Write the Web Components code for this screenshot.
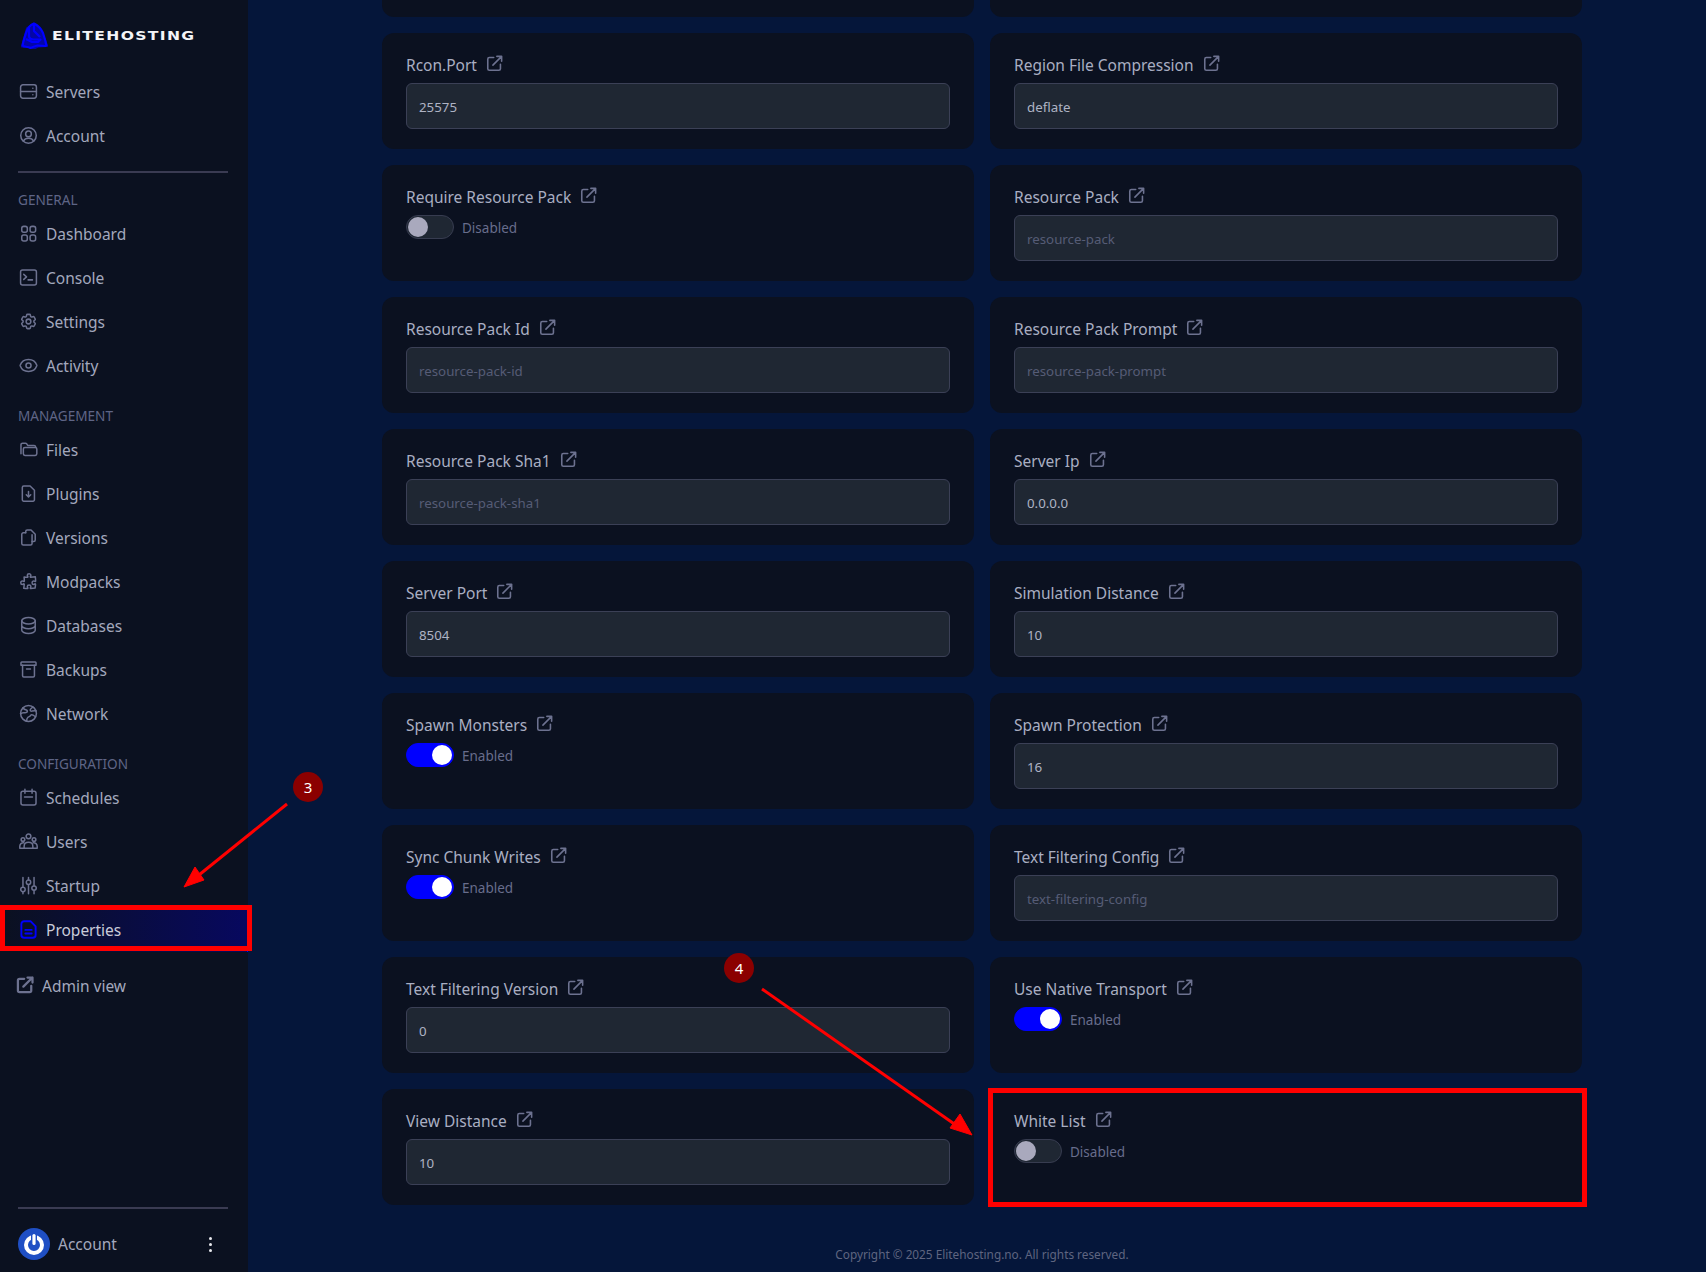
<!DOCTYPE html>
<html lang="en">
<head>
<meta charset="utf-8">
<title>Properties</title>
<style>
  html, body { margin: 0; padding: 0; background: #05163a; }
  body { font-family: "Noto Sans", "Liberation Sans", sans-serif; width: 1706px; height: 1272px; overflow: hidden; position: relative; }
</style>
</head>
<body>
<eh-shell>
  <eh-sidebar slot="side">
    <eh-nav-item icon="server" label="Servers"></eh-nav-item>
    <eh-nav-item icon="user" label="Account"></eh-nav-item>
    <eh-divider></eh-divider>
    <eh-nav-title first>GENERAL</eh-nav-title>
    <eh-nav-item icon="grid" label="Dashboard"></eh-nav-item>
    <eh-nav-item icon="console" label="Console"></eh-nav-item>
    <eh-nav-item icon="gear" label="Settings"></eh-nav-item>
    <eh-nav-item icon="eye" label="Activity"></eh-nav-item>
    <eh-nav-title>MANAGEMENT</eh-nav-title>
    <eh-nav-item icon="folder" label="Files"></eh-nav-item>
    <eh-nav-item icon="filedown" label="Plugins"></eh-nav-item>
    <eh-nav-item icon="copy" label="Versions"></eh-nav-item>
    <eh-nav-item icon="puzzle" label="Modpacks"></eh-nav-item>
    <eh-nav-item icon="db" label="Databases"></eh-nav-item>
    <eh-nav-item icon="archive" label="Backups"></eh-nav-item>
    <eh-nav-item icon="globe" label="Network"></eh-nav-item>
    <eh-nav-title>CONFIGURATION</eh-nav-title>
    <eh-nav-item icon="calendar" label="Schedules"></eh-nav-item>
    <eh-nav-item icon="users" label="Users"></eh-nav-item>
    <eh-nav-item icon="sliders" label="Startup"></eh-nav-item>
    <eh-nav-item icon="doc" label="Properties" active></eh-nav-item>
    <eh-admin-link></eh-admin-link>
  </eh-sidebar>
  <eh-field-stub></eh-field-stub><eh-field-stub></eh-field-stub>
  <eh-field label="Rcon.Port" value="25575"></eh-field>
  <eh-field label="Region File Compression" value="deflate"></eh-field>
  <eh-field label="Require Resource Pack" toggle="off"></eh-field>
  <eh-field label="Resource Pack" placeholder="resource-pack"></eh-field>
  <eh-field label="Resource Pack Id" placeholder="resource-pack-id"></eh-field>
  <eh-field label="Resource Pack Prompt" placeholder="resource-pack-prompt"></eh-field>
  <eh-field label="Resource Pack Sha1" placeholder="resource-pack-sha1"></eh-field>
  <eh-field label="Server Ip" value="0.0.0.0"></eh-field>
  <eh-field label="Server Port" value="8504"></eh-field>
  <eh-field label="Simulation Distance" value="10"></eh-field>
  <eh-field label="Spawn Monsters" toggle="on"></eh-field>
  <eh-field label="Spawn Protection" value="16"></eh-field>
  <eh-field label="Sync Chunk Writes" toggle="on"></eh-field>
  <eh-field label="Text Filtering Config" placeholder="text-filtering-config"></eh-field>
  <eh-field label="Text Filtering Version" value="0"></eh-field>
  <eh-field label="Use Native Transport" toggle="on"></eh-field>
  <eh-field label="View Distance" value="10"></eh-field>
  <eh-field label="White List" toggle="off"></eh-field>
</eh-shell>
<eh-annotations></eh-annotations>

<script>
  (function (customElements) {
    'use strict';

    const ICONS = {
      server: '<rect x="2" y="3.5" width="20" height="17" rx="3"/><path d="M2 12h20M17.5 7.8h.01M17.5 16.2h.01"/>',
      user: '<circle cx="12" cy="12" r="9.8"/><circle cx="12" cy="10" r="3.6"/><path d="M5.5 19c1.4-2.3 3.7-3.4 6.5-3.4s5.100 1.100 6.500 3.400"/>',
      grid: '<rect x="3.500" y="3" width="7" height="7.500" rx="2.500"/><rect x="14" y="3" width="7" height="7.500" rx="2.500"/><rect x="3.500" y="14" width="7" height="7.500" rx="2.500"/><rect x="14" y="14" width="7" height="7.500" rx="2.500"/>',
      console: '<rect x="2" y="2.500" width="20" height="19" rx="2.500"/><path d="M6 8l3.500 3.200L6 14.400M11.500 15h5.500"/>',
      gear: '<path d="M9.594 3.94c.09-.542.56-.94 1.11-.94h2.593c.55 0 1.02.398 1.11.94l.213 1.281c.063.374.313.686.645.87.074.04.147.083.22.127.325.196.72.257 1.075.124l1.217-.456a1.125 1.125 0 0 1 1.37.49l1.296 2.247a1.125 1.125 0 0 1-.26 1.431l-1.003.827c-.293.241-.438.613-.43.992a7.723 7.723 0 0 1 0 .255c-.008.378.137.75.43.991l1.004.827c.424.35.534.955.26 1.43l-1.298 2.247a1.125 1.125 0 0 1-1.369.491l-1.217-.456c-.355-.133-.75-.072-1.076.124a6.47 6.47 0 0 1-.22.128c-.331.183-.581.495-.644.869l-.213 1.281c-.09.543-.56.94-1.11.94h-2.594c-.55 0-1.019-.398-1.11-.94l-.213-1.281c-.062-.374-.312-.686-.644-.87a6.52 6.52 0 0 1-.22-.127c-.325-.196-.72-.257-1.076-.124l-1.217.456a1.125 1.125 0 0 1-1.369-.49l-1.297-2.247a1.125 1.125 0 0 1 .26-1.431l1.004-.827c.292-.24.437-.613.43-.991a6.932 6.932 0 0 1 0-.255c.007-.38-.138-.751-.43-.992l-1.004-.827a1.125 1.125 0 0 1-.26-1.43l1.297-2.247a1.125 1.125 0 0 1 1.37-.491l1.216.456c.356.133.751.072 1.076-.124.072-.044.146-.086.22-.128.332-.183.582-.495.644-.869l.214-1.28Z"/><circle cx="12" cy="12" r="3"/>',
      eye: '<path d="M1.500 12.300a1 1 0 0 1 0-.600C3 7.500 7.200 4.500 12 4.500s9 3 10.500 7.200a1 1 0 0 1 0 .600C21 16.500 16.800 19.500 12 19.500S3 16.500 1.500 12.300Z"/><circle cx="12" cy="12" r="3.200"/>',
      folder: '<path d="M2.500 17.500V6a2 2 0 0 1 2-2h3.600a2 2 0 0 1 1.600.800L11 6.800h8a2 2 0 0 1 2 1.700"/><rect x="5.500" y="9.500" width="17" height="10" rx="2"/>',
      filedown: '<path d="M6 2.500h8l5.500 5.500v12a1.800 1.800 0 0 1-1.800 1.800H6A1.800 1.800 0 0 1 4.200 20V4.300A1.800 1.800 0 0 1 6 2.500Z"/><path d="M12 9.500v6.500M9.200 13.600l2.800 2.800 2.800-2.800"/>',
      copy: '<path d="M8.500 6V4.500a2 2 0 0 1 2-2h4.700l5.300 5.300V15a2 2 0 0 1-2 2h-2"/><path d="M16.500 8.500V19.500a2 2 0 0 1-2 2H5.500a2 2 0 0 1-2-2V8a2 2 0 0 1 2-2h3"/>',
      puzzle: '<path d="M14.25 6.087c0-.355.186-.676.401-.959.221-.29.349-.634.349-1.003 0-1.036-1.007-1.875-2.25-1.875s-2.25.84-2.25 1.875c0 .369.128.713.349 1.003.215.283.401.604.401.959v0a.64.64 0 0 1-.657.643 48.39 48.39 0 0 1-4.163-.3c.186 1.613.293 3.25.315 4.907a.656.656 0 0 1-.658.663v0c-.355 0-.676-.186-.959-.401a1.647 1.647 0 0 0-1.003-.349c-1.036 0-1.875 1.007-1.875 2.25s.84 2.25 1.875 2.25c.369 0 .713-.128 1.003-.349.283-.215.604-.401.959-.401v0c.31 0 .555.26.532.57a48.039 48.039 0 0 1-.642 5.056c1.518.19 3.058.309 4.616.354a.64.64 0 0 0 .657-.643v0c0-.355-.186-.676-.401-.959a1.647 1.647 0 0 1-.349-1.003c0-1.035 1.008-1.875 2.25-1.875 1.243 0 2.25.84 2.25 1.875 0 .369-.128.713-.349 1.003-.215.283-.4.604-.4.959v0c0 .333.277.599.61.58a48.1 48.1 0 0 0 5.427-.63 48.05 48.05 0 0 0 .582-4.717.532.532 0 0 0-.533-.57v0c-.355 0-.676.186-.959.401-.29.221-.634.349-1.003.349-1.035 0-1.875-1.007-1.875-2.25s.84-2.25 1.875-2.25c.37 0 .713.128 1.003.349.283.215.604.401.96.401v0a.656.656 0 0 0 .658-.663 48.422 48.422 0 0 0-.37-5.36c-1.886.342-3.81.574-5.766.689a.578.578 0 0 1-.61-.58v0Z"/>',
      db: '<ellipse cx="12" cy="6" rx="8.500" ry="4"/><path d="M3.500 6v12c0 2.200 3.800 4 8.500 4s8.500-1.800 8.500-4V6M3.500 12c0 2.200 3.800 4 8.500 4s8.500-1.800 8.500-4"/>',
      archive: '<path d="M3.500 2.500h17a1 1 0 0 1 1 1v3h-19v-3a1 1 0 0 1 1-1Z"/><path d="M4.500 6.500V20a1.500 1.500 0 0 0 1.500 1.500h12a1.500 1.500 0 0 0 1.500-1.500V6.500M9.500 11.500h5"/>',
      globe: '<circle cx="12" cy="12" r="10"/><path d="M5 5c1.500 2 3 2.200 4.500 2.500 1.500.4 1.200 2.500 0 3.200-1.400.8-3.500-.2-5 .5-.8.4-2 .8-2.500 1M17.500 3.700c-1 1.500-2.500 2-3.200 3.300-.6 1.200.6 2.300 1.900 2 1.500-.3 3-.8 5.600-.2M9.500 21.500c.2-2 .5-3.600 1.800-4.700 1.300-1 3-1.200 3.500-2.500.5-1.200 2-1 3-.3 1 .7 2 1.500 3 2"/>',
      calendar: '<rect x="2.500" y="4" width="19" height="17.500" rx="2.500"/><path d="M7.500 1.500v5M16.500 1.500v5M7 11.500h10"/>',
      users: '<circle cx="12" cy="5.500" r="3"/><circle cx="5" cy="9.500" r="2.300"/><circle cx="19" cy="9.500" r="2.300"/><path d="M6.500 20.500v-2.500c0-3 2.400-5 5.500-5s5.500 2 5.500 5v2.500ZM6 13.500c-2.800-.2-5 1.800-5 4.500v2.500h5.500M18 13.500c2.800-.2 5 1.800 5 4.500v2.500h-5.500"/>',
      sliders: '<path d="M5 2v12M5 20v2.500M12 2v3M12 11v11.500M19 2v10M19 18.500v4"/><circle cx="5" cy="17" r="2.800"/><circle cx="12" cy="8" r="2.800"/><circle cx="19" cy="15.300" r="2.800"/>',
      doc: '<path d="M6.500 1.500h8L21 8v11a3.500 3.500 0 0 1-3.500 3.500h-11A3.500 3.500 0 0 1 3 19V5a3.500 3.500 0 0 1 3.500-3.500Z"/><path d="M8 12.500h8M8 17h8"/>',
      link: '<path d="M11 4.500H5.500a2 2 0 0 0-2 2v12a2 2 0 0 0 2 2h12a2 2 0 0 0 2-2V13"/><path d="M10 14L21 3M15 3h6v6"/>'
    };

    function icon(name, size, sw) {
      return `<svg width="${size}" height="${size}" viewBox="0 0 24 24" fill="none" stroke="currentColor" stroke-width="${sw}" stroke-linecap="round" stroke-linejoin="round">${ICONS[name]}</svg>`;
    }

    // page frame: fixed sidebar, grid of setting cards and the footer
    class EhShell extends HTMLElement {
      constructor() {
        super();
        this.attachShadow({mode: 'open'}).innerHTML = `
        <style>
          :host { display: flex; height: 1272px; }
          .main { flex: 1; min-width: 0; padding-left: 134px; }
          .grid { display: grid; grid-template-columns: 592px 592px; gap: 16px; width: 1200px; }
          footer {
            width: 1200px;
            margin-top: 41px;
            text-align: center;
            font-size: 11.800px;
            line-height: 16px;
            color: #5f6580;
          }
        </style>
        <slot name="side"></slot>
        <div class="main">
          <div class="grid"><slot></slot></div>
          <footer>Copyright © 2025 Elitehosting.no. All rights reserved.</footer>
        </div>`;
      }
    }

    class EhSidebar extends HTMLElement {
      constructor() {
        super();
        this.attachShadow({mode: 'open'}).innerHTML = `
        <style>
          :host {
            display: flex;
            flex-direction: column;
            flex: none;
            width: 248px;
            height: 1272px;
            background: #0b1120;
            box-sizing: border-box;
          }
          .logo { display: flex; align-items: center; height: 70px; padding-left: 21px; gap: 4px; box-sizing: border-box; }
          .logo svg { flex: none; margin-top: 1px; }
          .brand {
            font-family: "DejaVu Sans", sans-serif;
            font-weight: 700;
            font-size: 13px;
            letter-spacing: 1.1px;
            color: #f4f5f8;
            transform: scaleX(1.2);
            transform-origin: left center;
          }
          .nav { flex: 1; }
          .foot { padding: 0 20px 0 18px; }
          .foot hr { border: 0; height: 2px; background: #3a3b52; margin: 0 0 17px; }
          .acct { display: flex; align-items: center; height: 36px; margin-bottom: 10px; color: #a3a8bd; font-size: 15.500px; }
          .acct .name { flex: 1; margin-left: 8px; }
          .acct .avatar { width: 32px; height: 32px; flex: none; }
          .dots { display: flex; flex-direction: column; gap: 3px; margin-right: 16px; }
          .dots i { width: 3px; height: 3px; border-radius: 50%; background: #e8e9ee; }
        </style>
        <div class="logo">
          <svg width="27" height="27" viewBox="0 0 27 27" fill="none" stroke="#0000ff" stroke-width="2.200" stroke-linejoin="round">
            <path d="M13 1.500L19 7l5 11 2 6-9 .500-4 2-5-2H1l2-7 3-11z" fill="#0000ff" opacity=".6"/>
            <path d="M13 1.500C9 3 6.500 6 5 11c-1 3.500-2.500 7-3.500 13M13 1.500c4 2 7 5 9 9.500 1 3 2.500 8 3.500 13M1.500 24c3 1 5.500 .5 8 2 3-1.500 5-2 7-2.500 3 0 6 .5 9 .5M8 6v8c0 2.500 2 3.500 5 3.500h6M13 2v7l6 6M5 17l6 3h6l3-3"/>
          </svg>
          <span class="brand">ELITEHOSTING</span>
        </div>
        <div class="nav"><slot></slot></div>
        <div class="foot">
          <hr>
          <div class="acct">
            <svg class="avatar" viewBox="0 0 32 32">
              <circle cx="16" cy="16" r="16" fill="#1f4fc4"/>
              <circle cx="16" cy="17" r="8" fill="none" stroke="#fff" stroke-width="4"/>
              <path d="M16 7v9" stroke="#1f4fc4" stroke-width="6"/>
              <path d="M16 7.500v8" stroke="#fff" stroke-width="3.200" stroke-linecap="round"/>
            </svg>
            <span class="name">Account</span>
            <span class="dots"><i></i><i></i><i></i></span>
          </div>
        </div>`;
      }
    }

    class EhNavItem extends HTMLElement {
      constructor() {
        super();
        const active = this.hasAttribute('active');
        this.attachShadow({mode: 'open'}).innerHTML = `
        <style>
          :host {
            display: flex;
            align-items: center;
            height: 44px;
            padding-left: 19px;
            gap: 8px;
            box-sizing: border-box;
            font-size: 15.500px;
            color: ${active ? '#c9ccda' : '#a3a8bd'};
            ${active ? 'background: linear-gradient(90deg, #0b1120 0%, #07085f 100%); border-right: 1px solid #0000ff;' : ''}
          }
          svg { flex: none; color: ${active ? '#0000ff' : '#6d7290'}; margin-top: -2px; }
          span { margin-top: -1px; }
        </style>
        ${icon(this.getAttribute('icon'), 19, active ? 2.4 : 1.9)}
        <span>${this.getAttribute('label')}</span>`;
      }
    }

    class EhNavTitle extends HTMLElement {
      constructor() {
        super();
        this.attachShadow({mode: 'open'}).innerHTML = `
        <style>
          :host {
            display: block;
            margin: ${this.hasAttribute('first') ? '18px' : '19px'} 0 3px 18px;
            font-size: 13.600px;
            line-height: 18px;
            color: #5f6586;
          }
        </style>
        <slot></slot>`;
      }
    }

    class EhDivider extends HTMLElement {
      constructor() {
        super();
        this.attachShadow({mode: 'open'}).innerHTML = `
        <style>
          :host { display: block; height: 2px; margin: 13px 20px 0 18px; background: #3a3b52; }
        </style>`;
      }
    }

    class EhAdminLink extends HTMLElement {
      constructor() {
        super();
        this.attachShadow({mode: 'open'}).innerHTML = `
        <style>
          :host {
            display: flex;
            align-items: center;
            gap: 7px;
            height: 24px;
            margin-top: 22px;
            padding-left: 15px;
            font-size: 15.500px;
            color: #a3a8bd;
          }
          svg { color: #6d7290; flex: none; margin-top: -2px; }
        </style>
        ${icon('link', 20, 2.7)}
        <span>Admin view</span>`;
      }
    }

    class EhToggle extends HTMLElement {
      constructor() {
        super();
        const on = this.hasAttribute('on');
        this.attachShadow({mode: 'open'}).innerHTML = `
        <style>
          :host { display: flex; align-items: center; gap: 8px; height: 24px; font-size: 13.500px; color: #686d8c; }
          .track {
            display: flex;
            justify-content: ${on ? 'flex-end' : 'flex-start'};
            align-items: center;
            width: 48px;
            height: 24px;
            padding: 1px;
            box-sizing: border-box;
            border-radius: 12px;
            background: ${on ? '#0000ff' : '#1f2733'};
            border: 1px solid ${on ? '#0000ff' : '#373c50'};
          }
          .knob { width: 20px; height: 20px; border-radius: 50%; background: ${on ? '#ffffff' : '#a9a9bd'}; }
          span { margin-top: 1px; }
        </style>
        <div class="track"><div class="knob"></div></div>
        <span>${on ? 'Enabled' : 'Disabled'}</span>`;
      }
    }
    customElements.define('eh-toggle', EhToggle);

    class EhField extends HTMLElement {
      constructor() {
        super();
        const ph = this.getAttribute('placeholder');
        const toggle = this.getAttribute('toggle');
        let control;
        if (toggle) {
          control = `<eh-toggle ${toggle === 'on' ? 'on' : ''}></eh-toggle>`;
        } else {
          control = `<div class="input ${ph ? 'ph' : ''}">${ph || this.getAttribute('value')}</div>`;
        }
        this.attachShadow({mode: 'open'}).innerHTML = `
        <style>
          :host {
            display: block;
            height: 116px;
            padding: 24px;
            box-sizing: border-box;
            border-radius: 12px;
            background: #0b1120;
          }
          .label {
            display: flex;
            align-items: center;
            gap: 8px;
            height: 20px;
            margin-bottom: 6px;
            font-size: 15.500px;
            color: #a9aec2;
          }
          .label span { margin-top: -4px; }
          .label svg { color: #6d7290; margin-top: -7px; flex: none; }
          .input {
            height: 46px;
            padding: 2px 12px 0;
            box-sizing: border-box;
            display: flex;
            align-items: center;
            background: #1f2733;
            border: 1px solid #3b4056;
            border-radius: 6px;
            font-size: 13.300px;
            color: #aeb3c4;
          }
          .input.ph { color: #565c76; }
        </style>
        <div class="label"><span>${this.getAttribute('label')}</span>${icon('link', 19, 2)}</div>
        ${control}`;
      }
    }

    // first row of the list is scrolled away, only its bottom edge is left
    class EhFieldStub extends HTMLElement {
      constructor() {
        super();
        this.attachShadow({mode: 'open'}).innerHTML = `
        <style>
          :host { display: block; height: 17px; border-radius: 0 0 12px 12px; background: #0b1120; }
        </style>`;
      }
    }

    // tutorial marks drawn on top of the screenshot
    class EhAnnotations extends HTMLElement {
      constructor() {
        super();
        this.attachShadow({mode: 'open'}).innerHTML = `
        <style>
          :host { position: absolute; left: 0; top: 0; width: 1706px; height: 1272px; pointer-events: none; }
          svg { position: absolute; left: 0; top: 0; }
          .box { position: absolute; border: 5px solid #ff0000; box-sizing: border-box; }
          .badge {
            position: absolute;
            width: 30px;
            height: 30px;
            border-radius: 50%;
            background: #8b0000;
            color: #fff;
            font-size: 15px;
            line-height: 30px;
            text-align: center;
          }
        </style>
        <svg width="1706" height="1272" fill="#ff0000" stroke="#ff0000" stroke-width="3">
          <line x1="287" y1="804" x2="194" y2="879"/>
          <polygon points="184,887 195,867 204,880" stroke-width="1"/>
          <line x1="762" y1="989" x2="960" y2="1128"/>
          <polygon points="972,1135 950,1128 960,1114" stroke-width="1"/>
        </svg>
        <div class="box" style="left:0;top:905px;width:252px;height:46px"></div>
        <div class="box" style="left:988px;top:1088px;width:599px;height:119px"></div>
        <div class="badge" style="left:293px;top:772px">3</div>
        <div class="badge" style="left:724px;top:953px">4</div>`;
      }
    }

    customElements.define('eh-shell', EhShell);
    customElements.define('eh-sidebar', EhSidebar);
    customElements.define('eh-nav-item', EhNavItem);
    customElements.define('eh-nav-title', EhNavTitle);
    customElements.define('eh-divider', EhDivider);
    customElements.define('eh-admin-link', EhAdminLink);
    customElements.define('eh-field', EhField);
    customElements.define('eh-field-stub', EhFieldStub);
    customElements.define('eh-annotations', EhAnnotations);
  })(window.customElements);
</script>
</body>
</html>
